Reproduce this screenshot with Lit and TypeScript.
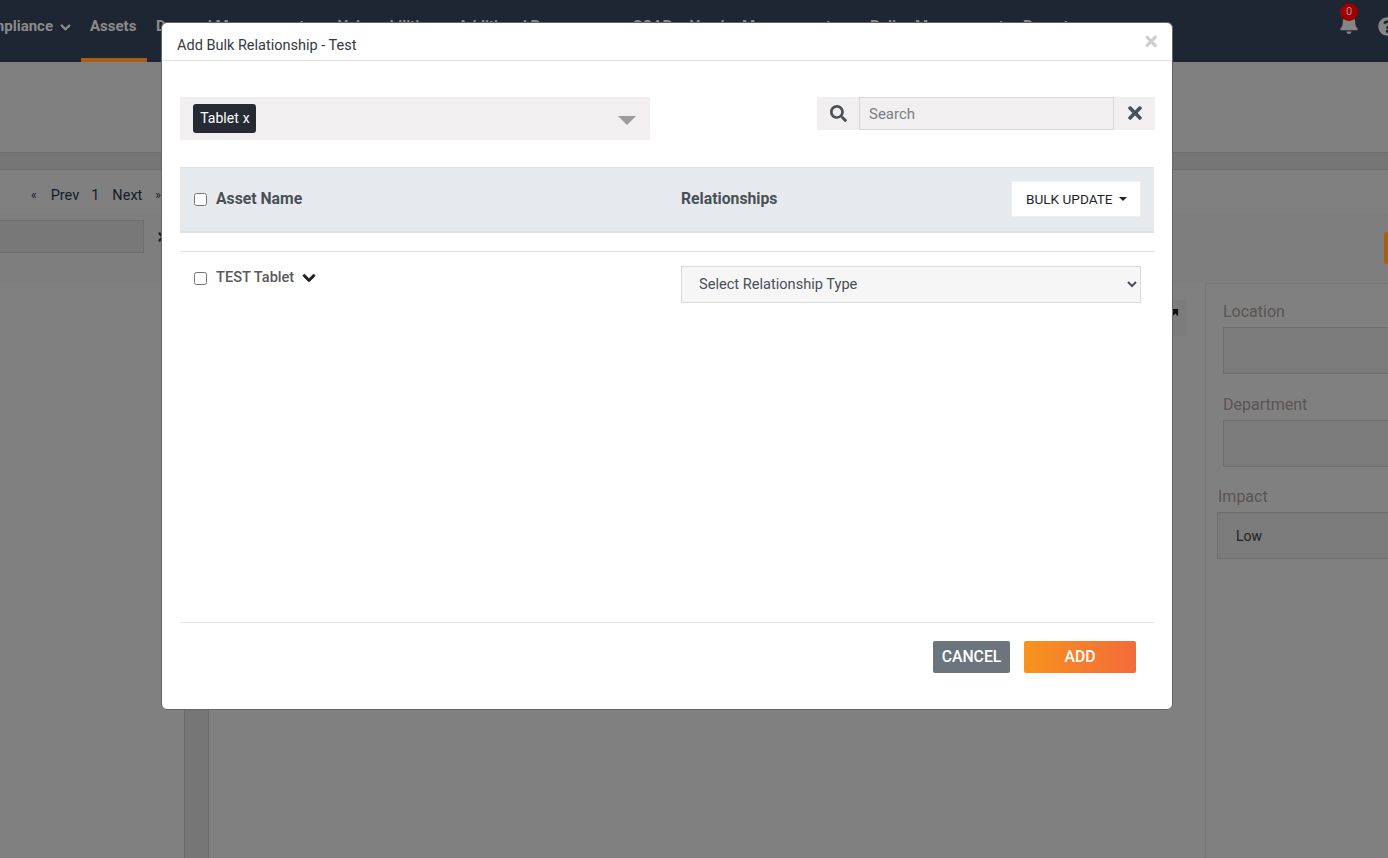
import { LitElement, html, css } from "lit";
import { customElement } from "lit/decorators.js";

const chevron = "M207.029 381.476L12.686 187.132c-9.373-9.373-9.373-24.569 0-33.941l22.667-22.667c9.357-9.357 24.522-9.375 33.901-.04L224 284.505l154.745-154.021c9.379-9.335 24.544-9.317 33.901.04l22.667 22.667c9.373 9.373 9.373 24.569 0 33.941L240.971 381.476c-9.373 9.372-24.569 9.372-33.942 0z";
const times = "M242.72 256l100.07-100.07c12.28-12.28 12.28-32.19 0-44.48l-22.24-22.24c-12.28-12.28-32.19-12.28-44.48 0L176 189.28 75.93 89.21c-12.28-12.28-32.19-12.28-44.48 0L9.21 111.45c-12.28 12.28-12.28 32.19 0 44.48L109.28 256 9.21 356.07c-12.28 12.28-12.28 32.19 0 44.48l22.24 22.24c12.28 12.28 32.2 12.28 44.48 0L176 322.72l100.07 100.07c12.28 12.28 32.2 12.28 44.48 0l22.24-22.24c12.28-12.28 12.28-32.19 0-44.48L242.72 256z";
const search = "M505 442.7L405.3 343c-4.5-4.5-10.6-7-17-7H372c27.6-35.3 44-79.7 44-128C416 93.1 322.9 0 208 0S0 93.1 0 208s93.1 208 208 208c48.3 0 92.7-16.4 128-44v16.3c0 6.4 2.5 12.5 7 17l99.7 99.7c9.4 9.4 24.6 9.4 33.9 0l28.3-28.3c9.4-9.4 9.4-24.6.1-34zM208 336c-70.7 0-128-57.2-128-128 0-70.7 57.2-128 128-128 70.7 0 128 57.2 128 128 0 70.7-57.2 128-128 128z";
const bell = "M224 512c35.32 0 63.97-28.65 63.97-63.97H160.03C160.03 483.35 188.68 512 224 512zm215.39-149.71c-19.32-20.76-55.47-51.99-55.47-154.29 0-77.7-54.48-139.9-127.94-155.16V32c0-17.67-14.32-32-31.98-32s-31.98 14.33-31.98 32v20.84C118.56 68.1 64.08 130.3 64.08 208c0 102.3-36.15 133.53-55.47 154.29-6 6.45-8.66 14.16-8.61 21.71.11 16.4 12.98 32 32.1 32h383.8c19.12 0 32-15.6 32.1-32 .05-7.55-2.61-15.27-8.61-21.71z";
const question = "M504 256c0 136.997-111.043 248-248 248S8 392.997 8 256C8 119.083 119.043 8 256 8s248 111.083 248 248zM262.655 90c-54.497 0-89.255 22.957-116.549 63.758-3.536 5.286-2.353 12.415 2.715 16.258l34.699 26.31c5.205 3.947 12.621 3.008 16.665-2.122 17.864-22.658 30.113-35.797 57.303-35.797 20.429 0 45.698 13.148 45.698 32.958 0 14.976-12.363 22.667-32.534 33.976C247.128 238.528 216 254.941 216 296v4c0 6.627 5.373 12 12 12h56c6.627 0 12-5.373 12-12v-1.333c0-28.462 83.186-29.647 83.186-106.667 0-58.002-60.165-102-116.531-102zM256 338c-25.365 0-46 20.635-46 46 0 25.364 20.635 46 46 46s46-20.636 46-46c0-25.365-20.635-46-46-46z";

const icon = (d: string, box: string, cls: string) => {
  const el = document.createElementNS("http://www.w3.org/2000/svg", "svg");
  el.setAttribute("viewBox", box);
  el.setAttribute("class", cls);
  const p = document.createElementNS("http://www.w3.org/2000/svg", "path");
  p.setAttribute("d", d);
  p.setAttribute("fill", "currentColor");
  el.appendChild(p);
  return el;
};

@customElement("app-root")
export class AppRoot extends LitElement {
  static styles = css`
    :host {
      display: block;
      width: 1388px;
      height: 858px;
      position: relative;
      overflow: hidden;
      background: #808080;
      font-family: Roboto, "Liberation Sans", sans-serif;
      font-size: 14px;
      color: #212529;
    }
    * { box-sizing: border-box; }

    /* Dimmed page behind the dialog */
    .nav {
      height: 62px;
      background: #1f2633;
      display: flex;
      overflow: hidden;
    }
    .nav-items {
      display: grid;
      grid-template-columns: 117px 66px 182px 120px 175px 57px 180px 153px 60px;
      margin-left: -27px;
      padding-top: 17px;
      width: 1110px;
      flex: none;
      font-weight: 700;
      font-size: 15px;
      line-height: 18px;
      color: #8b8b8b;
      white-space: nowrap;
    }
    .nav-item { position: relative; height: 45px; }
    .nav-item.active::after {
      content: "";
      position: absolute;
      left: -9px;
      width: 66px;
      bottom: 0;
      height: 4px;
      background: #a85c14;
    }
    .nav-chev { width: 11px; height: 11px; margin-left: 7px; vertical-align: -2px; }
    .nav-chev path, .chev path { stroke: currentColor; stroke-width: 36; }
    .nav-right { margin-left: auto; display: flex; padding-top: 14px; }
    .bell-wrap { position: relative; width: 20px; height: 20px; margin-right: 19px; color: #858585; }
    .bell { width: 20px; height: 20px; display: block; }
    .badge {
      position: absolute;
      left: 1px;
      top: -11px;
      width: 18px;
      height: 18px;
      border-radius: 50%;
      background: #9c0000;
      color: #c08a8a;
      font-size: 11px;
      line-height: 18px;
      text-align: center;
    }
    .help { width: 19px; height: 19px; margin-top: 3px; margin-right: -9px; color: #858585; display: block; flex: none; }

    .subhead { height: 90px; }
    .band {
      height: 18px;
      background: #767676;
      border-top: 1px solid #6e6e6e;
      border-bottom: 1px solid #6e6e6e;
    }
    .pager {
      height: 44px;
      display: flex;
      align-items: center;
      padding: 6px 0 0 31px;
      color: #121c2b;
      font-size: 14.5px;
    }
    .pager span { margin-right: 13px; }
    .pager .q { font-size: 12px; margin-right: 14px; }
    .pager .prev { margin-right: 12px; }
    .toolbar {
      height: 69px;
      background: #7e7e7e;
      display: flex;
      padding-top: 6px;
    }
    .filter-box {
      width: 144px;
      height: 33px;
      background: #787878;
      border: 1px solid #6e6e6e;
      border-left: 0;
    }
    .tool-x { width: 10px; height: 14px; margin: 10px 0 0 14px; color: #222; flex: none; }
    .tool-btn {
      margin: 12px 0 0 auto;
      width: 40px;
      height: 32px;
      margin-right: -36px;
      background: #a85c14;
      border-radius: 3px;
      flex: none;
    }
    .content {
      height: 575px;
      display: grid;
      grid-template-columns: 184px 25px 1fr 183px;
    }
    .strip {
      grid-column: 2;
      background: #767676;
      border-left: 1px solid #6b6b6b;
      border-right: 1px solid #6b6b6b;
    }
    .main { padding: 17px 18px 0 0; display: flex; justify-content: flex-end; }
    .expand {
      width: 50px;
      height: 36px;
      background: #7c7c7c;
      display: flex;
      justify-content: flex-end;
      align-items: flex-start;
      padding: 8px 8px 0 0;
      color: #111;
    }
    .expand svg { width: 11px; height: 11px; display: block; }
    .side {
      border-left: 1px solid #777;
      border-top: 1px solid #777;
      padding: 18px 0 0 11px;
      color: #5a5654;
      font-size: 16px;
    }
    .side label { display: block; line-height: 19px; height: 25px; padding-left: 6px; }
    .side .in {
      height: 47px;
      margin: 0 -2px 21px 6px;
      background: #7b7b7b;
      border: 1px solid #6e6e6e;
    }
    .side .impact { padding-left: 1px; margin-top: -1px; height: 25px; line-height: 19px; }
    .side .sel {
      height: 47px;
      background: #7b7b7b;
      border: 1px solid #6e6e6e;
      padding: 14px 18px;
      font-size: 14px;
      line-height: 18px;
      color: #1e1e24;
      margin-right: -2px;
    }

    /* Dialog */
    .modal {
      position: absolute;
      left: 161px;
      top: 22px;
      width: 1012px;
      height: 688px;
      background: #fff;
      border: 1px solid #666;
      border-radius: 6px;
      display: flex;
      flex-direction: column;
    }
    .m-head {
      height: 38px;
      flex: none;
      border-bottom: 1px solid #e1e2e4;
      display: flex;
      justify-content: space-between;
      padding: 14px 14px 0 15px;
      color: #343a40;
      font-size: 14.5px;
      line-height: 17px;
    }
    .m-close {
      color: #cdcdcd;
      font-weight: 700;
      font-size: 26px;
      line-height: 10px;
      margin-top: -1px;
    }
    .m-body {
      flex: 1;
      display: flex;
      flex-direction: column;
      padding: 36px 17px 0 18px;
    }
    .filters { display: flex; justify-content: space-between; align-items: flex-start; }
    .multi {
      width: 470px;
      height: 43px;
      background: #f1eff0;
      display: flex;
      justify-content: space-between;
      padding: 7px 14px 0 13px;
    }
    .chip {
      width: 63px;
      height: 29px;
      background: #272a35;
      color: #fff;
      border-radius: 3px;
      display: flex;
      align-items: center;
      justify-content: center;
      gap: 4px;
      font-size: 14px;
      padding: 0 0 2px 1px;
    }
    .caret-big {
      width: 0;
      height: 0;
      margin-top: 12px;
      border-left: 9px solid transparent;
      border-right: 9px solid transparent;
      border-top: 9px solid #9c9c9c;
    }
    .search {
      width: 338px;
      height: 33px;
      background: #f1eff0;
      display: flex;
      align-items: center;
    }
    .s-ico { width: 42px; display: flex; justify-content: center; color: #495057; }
    .s-ico svg { width: 17px; height: 17px; display: block; }
    .s-x { width: 41px; display: flex; justify-content: center; color: #495057; }
    .s-x svg { width: 14px; height: 20px; display: block; margin-top: -2px; }
    .search input {
      width: 255px;
      height: 33px;
      background: #f1eff0;
      border: 1px solid #d8d8d8;
      padding: 1px 9px 0;
      font: 15px Roboto, sans-serif;
      outline: 0;
      margin: 0;
    }
    .search input::placeholder { color: #7a8087; opacity: 1; }
    .thead {
      margin-top: 27px;
      width: 974px;
      height: 66px;
      background: #e7eaed;
      border-top: 1px solid #dfe2e6;
      border-bottom: 2px solid #dee1e6;
      display: grid;
      grid-template-columns: 487px 1fr;
      align-items: center;
      padding: 0 13px 2px 14px;
      font-weight: 700;
      font-size: 15.75px;
      color: #495057;
    }
    .cell { display: flex; align-items: center; }
    .cell input { margin: 2px 9px 0 0; width: 13px; height: 13px; flex: none; }
    .th-right { display: flex; align-items: center; justify-content: space-between; }
    .bulk {
      width: 130px;
      height: 36px;
      background: #fff;
      border: 1px solid #eef0f2;
      display: flex;
      align-items: center;
      padding-left: 14px;
      font-weight: 400;
      font-size: 13.6px;
      color: #212529;
      margin-top: 1px;
      padding-bottom: 1px;
    }
    .caret {
      width: 0;
      height: 0;
      margin-left: 6px;
      border-left: 4px solid transparent;
      border-right: 4px solid transparent;
      border-top: 4px solid #212529;
    }
    .row {
      margin-top: 18px;
      border-top: 1px solid #dfe2e6;
      height: 371px;
      flex: none;
      display: grid;
      grid-template-columns: 487px 1fr;
      padding: 14px 14px 0 14px;
      align-items: start;
    }
    .row .cell { padding-top: 2px; font-size: 14.6px; font-weight: 500; color: #5a5a5a; line-height: 18px; }
    .row .cell input { margin-top: 3px; }
    .row .chev { width: 14px; height: 14px; margin: 2px 0 0 8px; color: #222; flex: none; }
    select {
      width: 460px;
      height: 37px;
      background: #f6f6f6;
      border: 1px solid #d9d9d9;
      border-radius: 0;
      padding: 0 0 2px 13px;
      font: 14.6px Roboto, sans-serif;
      color: #495057;
      outline: 0;
    }
    .m-foot {
      border-top: 1px solid #e1e2e4;
      width: 974px;
      padding: 18px 18px 0 0;
      display: flex;
      justify-content: flex-end;
      gap: 14px;
    }
    .btn {
      height: 32px;
      border: 0;
      border-radius: 2px;
      color: #fff;
      font: 500 15.75px Roboto, sans-serif;
      padding: 0 0 2px;
    }
    .cancel { width: 77px; background: #6c757d; }
    .add { width: 112px; background: linear-gradient(90deg, #f7931e, #f46b3b); }
  `;

  render() {
    return html`
      <div class="nav">
        <div class="nav-items">
          <div class="nav-item">Compliance${icon(chevron, "0 0 448 512", "nav-chev")}</div>
          <div class="nav-item active">Assets</div>
          <div class="nav-item">Demand Management</div>
          <div class="nav-item">Vulnerabilities</div>
          <div class="nav-item">Additional Resources</div>
          <div class="nav-item">SOAR</div>
          <div class="nav-item">Vendor Management</div>
          <div class="nav-item">Policy Management</div>
          <div class="nav-item">Reports</div>
        </div>
        <div class="nav-right">
          <div class="bell-wrap">
            ${icon(bell, "0 0 448 512", "bell")}
            <div class="badge">0</div>
          </div>
          ${icon(question, "0 0 512 512", "help")}
        </div>
      </div>
      <div class="subhead"></div>
      <div class="band"></div>
      <div class="pager">
        <span class="q">«</span><span class="prev">Prev</span><span>1</span><span>Next</span><span class="q">»</span>
      </div>
      <div class="toolbar">
        <div class="filter-box"></div>
        ${icon(times, "0 0 352 512", "tool-x")}
        <div class="tool-btn"></div>
      </div>
      <div class="content">
        <div></div>
        <div class="strip"></div>
        <div class="main">
          <div class="expand">
            <svg viewBox="0 0 12 12"><path fill="currentColor" d="M3 1h8v8L8 6 3 11 1 9l5-5z"/></svg>
          </div>
        </div>
        <div class="side">
          <label>Location</label>
          <div class="in"></div>
          <label>Department</label>
          <div class="in"></div>
          <div class="impact">Impact</div>
          <div class="sel">Low</div>
        </div>
      </div>

      <div class="modal">
        <div class="m-head">
          <span>Add Bulk Relationship - Test</span>
          <span class="m-close">×</span>
        </div>
        <div class="m-body">
          <div class="filters">
            <div class="multi">
              <div class="chip"><span>Tablet</span><span>x</span></div>
              <div class="caret-big"></div>
            </div>
            <div class="search">
              <div class="s-ico">${icon(search, "0 0 512 512", "")}</div>
              <input placeholder="Search" />
              <div class="s-x">${icon(times, "0 0 352 512", "")}</div>
            </div>
          </div>
          <div class="thead">
            <div class="cell"><input type="checkbox" /><span>Asset Name</span></div>
            <div class="th-right">
              <span>Relationships</span>
              <div class="bulk">BULK UPDATE<span class="caret"></span></div>
            </div>
          </div>
          <div class="row">
            <div class="cell">
              <input type="checkbox" /><span>TEST Tablet</span>
              ${icon(chevron, "0 0 448 512", "chev")}
            </div>
            <select><option>Select Relationship Type</option></select>
          </div>
          <div class="m-foot">
            <button class="btn cancel">CANCEL</button>
            <button class="btn add">ADD</button>
          </div>
        </div>
      </div>
    `;
  }
}
